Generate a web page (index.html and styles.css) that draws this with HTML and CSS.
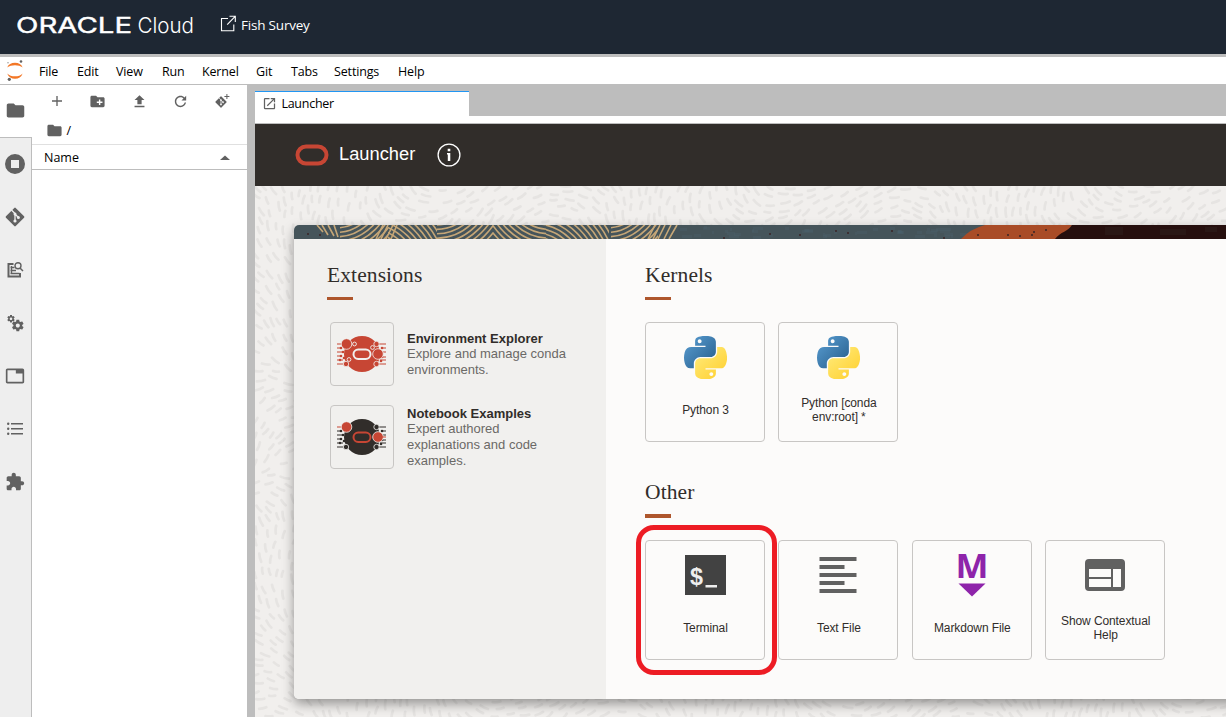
FILE: index.html
```html
<!DOCTYPE html>
<html lang="en">
<head>
<meta charset="utf-8">
<title>Launcher</title>
<link rel="stylesheet" href="styles.css">
</head>
<body>
<svg class="defs" width="0" height="0">
  <defs>
    <linearGradient id="py-blue" x1="0" y1="0" x2="0.8" y2="0.8"><stop offset="0" stop-color="#5a9fd4"/><stop offset="1" stop-color="#306998"/></linearGradient>
    <linearGradient id="py-yellow" x1="0.2" y1="0.1" x2="0.8" y2="0.8"><stop offset="0" stop-color="#ffe873"/><stop offset="1" stop-color="#ffd43b"/></linearGradient>
    <symbol id="folder" viewBox="0 0 24 24"><path d="M10 4H4c-1.1 0-1.99.9-1.99 2L2 18c0 1.1.9 2 2 2h16c1.1 0 2-.9 2-2V8c0-1.1-.9-2-2-2h-8l-2-2z"/></symbol>
    <symbol id="gear" viewBox="0 0 24 24"><path d="M19.43 12.98c.04-.32.07-.64.07-.98s-.03-.66-.07-.98l2.11-1.65c.19-.15.24-.42.12-.64l-2-3.46c-.12-.22-.39-.3-.61-.22l-2.49 1c-.52-.4-1.08-.73-1.69-.98l-.38-2.65C14.46 2.18 14.25 2 14 2h-4c-.25 0-.46.18-.49.42l-.38 2.65c-.61.25-1.17.59-1.69.98l-2.49-1c-.23-.09-.49 0-.61.22l-2 3.46c-.13.22-.07.49.12.64l2.11 1.65c-.04.32-.07.65-.07.98s.03.66.07.98l-2.11 1.65c-.19.15-.24.42-.12.64l2 3.46c.12.22.39.3.61.22l2.49-1c.52.4 1.08.73 1.69.98l.38 2.65c.03.24.24.42.49.42h4c.25 0 .46-.18.49-.42l.38-2.65c.61-.25 1.17-.59 1.69-.98l2.49 1c.23.09.49 0 .61-.22l2-3.46c.12-.22.07-.49-.12-.64l-2.11-1.65zM12 15.5c-1.93 0-3.5-1.57-3.5-3.5s1.57-3.5 3.5-3.5 3.5 1.57 3.5 3.5-1.57 3.5-3.5 3.5z"/></symbol>
    <symbol id="git" viewBox="0 0 20 20">
      <rect x="3.100" y="3.100" width="13.800" height="13.800" rx="1" transform="rotate(45 10 10)"/>
      <g class="git-branch"><path d="M6.500 3L10 6.600V14M10 7L13.200 10.200" fill="none" stroke-width="1.300"/><circle cx="10" cy="7" r="1.500"/><circle cx="10" cy="14" r="1.600"/><circle cx="13.400" cy="10.400" r="1.500"/></g>
    </symbol>
    <symbol id="launch" viewBox="0 0 24 24"><path d="M19 19H5V5h7V3H5a2 2 0 0 0-2 2v14a2 2 0 0 0 2 2h14c1.1 0 2-.9 2-2v-7h-2v7zM14 3v2h3.59l-9.83 9.83 1.41 1.41L19 6.41V10h2V3h-7z"/></symbol>
    <symbol id="python" viewBox="0 0 111 111">
      <path fill="url(#py-blue)" d="M54.92 0C50.34.02 45.96.41 42.11 1.09 30.76 3.1 28.7 7.29 28.7 15.03v10.22h26.81v3.41H18.64c-7.79 0-14.62 4.68-16.75 13.59-2.46 10.21-2.57 16.59 0 27.25 1.91 7.94 6.46 13.59 14.25 13.59h9.22v-12.25c0-8.85 7.66-16.66 16.75-16.66h26.78c7.46 0 13.41-6.14 13.41-13.62V15.03c0-7.27-6.13-12.72-13.41-13.94C64.28.33 59.5-.02 54.92 0zM40.42 8.22c2.77 0 5.03 2.3 5.03 5.12 0 2.82-2.26 5.1-5.03 5.1-2.78 0-5.03-2.28-5.03-5.1 0-2.82 2.25-5.12 5.03-5.12z"/>
      <path fill="url(#py-yellow)" d="M85.64 28.66v11.9c0 9.23-7.83 17-16.75 17H42.11c-7.34 0-13.41 6.28-13.41 13.63v25.53c0 7.27 6.32 11.54 13.41 13.62 8.49 2.5 16.63 2.95 26.78 0 6.75-1.95 13.41-5.89 13.41-13.62V86.5H55.51v-3.41H95.7c7.79 0 10.7-5.43 13.41-13.59 2.8-8.4 2.68-16.48 0-27.25-1.93-7.76-5.61-13.59-13.41-13.59zM70.58 93.31c2.78 0 5.03 2.28 5.03 5.1 0 2.82-2.25 5.12-5.03 5.12-2.77 0-5.03-2.3-5.03-5.12 0-2.82 2.26-5.1 5.03-5.1z"/>
    </symbol>
  </defs>
</svg>

<header class="topbar">
  <svg class="brand" width="180" height="24" viewBox="0 0 180 24">
    <text class="brand-name" x="1" y="18.500" textLength="116" lengthAdjust="spacingAndGlyphs">ORACLE</text>
    <text class="brand-sub" x="122.500" y="19" textLength="56.500" lengthAdjust="spacingAndGlyphs">Cloud</text>
  </svg>
  <svg class="project-icon" width="18" height="18" viewBox="0 0 18 18" fill="none" stroke="#fff" stroke-width="1.1"><path d="M8 3.5H1.5v12.2h12.3V9.5M9.5 1.2h5.8V7M15.2 1.3L7.2 9.6"/></svg>
  <span class="project">Fish Survey</span>
</header>

<nav class="menubar">
  <svg class="jupyter" width="18" height="22" viewBox="0 0 18 22">
    <path fill="#f37726" d="M1.200 7.600C2.500 4.200 5.200 2.800 9 2.800s6.300 1.400 7.600 4.800C14.700 5.900 12 5.200 9 5.200S3.200 5.900 1.200 7.600zM1.200 13.400c1.500 3.700 4.200 5.300 7.800 5.300s6.300-1.600 7.600-5.300c-1.700 2-4.500 2.900-7.600 2.900s-5.800-.9-7.800-2.900z"/>
    <circle cx="15" cy="1.500" r="1.300" fill="#616161"/><circle cx="2" cy="2.800" r=".8" fill="#9e9e9e"/><circle cx="3.300" cy="19.300" r="1.600" fill="#616161"/>
  </svg>
  <ul class="menu"><li>File</li><li>Edit</li><li>View</li><li>Run</li><li>Kernel</li><li>Git</li><li>Tabs</li><li>Settings</li><li>Help</li></ul>
</nav>

<div class="workspace">
  <aside class="rail">
    <div class="rail-item active"><svg width="21" height="21"><use href="#folder"/></svg></div>
    <div class="rail-item"><svg width="20" height="20" viewBox="0 0 20 20"><path fill-rule="evenodd" d="M10 0a10 10 0 1 0 0 20a10 10 0 0 0 0-20zM6 6h8v8H6z"/></svg></div>
    <div class="rail-item"><svg width="20" height="20"><use href="#git"/></svg></div>
    <div class="rail-item"><svg class="outline" width="18" height="18" viewBox="0 0 18 18"><path stroke-width="2" d="M7.500 3H2.500v12.500H14v-3.500"/><path stroke-width="1.400" d="M4.500 6.500h4M4.500 9.500h5.500M4.500 12.500h9M5.500 5v8"/><circle cx="12" cy="4.700" r="3" stroke-width="1.400"/><path stroke-width="1.500" d="M14 7l3 3"/></svg></div>
    <div class="rail-item"><svg width="20" height="20" viewBox="0 0 20 20"><use href="#gear" x="1.500" y="1.200" width="9" height="9"/><use href="#gear" x="5.800" y="5.500" width="14" height="14"/></svg></div>
    <div class="rail-item"><svg width="20" height="20" viewBox="0 0 24 24"><path d="M21 3H3c-1.100 0-2 .9-2 2v14c0 1.100.9 2 2 2h18c1.100 0 2-.9 2-2V5c0-1.100-.9-2-2-2zm0 16H3V5h10v4h8v10z"/></svg></div>
    <div class="rail-item"><svg width="18" height="16" viewBox="0 0 18 16"><path d="M5 2h12v1.500H5zM5 7h12v1.500H5zM5 12h12v1.500H5z"/><circle cx="2.200" cy="2.750" r="1.200"/><circle cx="2.200" cy="7.750" r="1.200"/><circle cx="2.200" cy="12.750" r="1.200"/></svg></div>
    <div class="rail-item"><svg width="20" height="20" viewBox="0 0 24 24"><path d="M20.500 11H19V7c0-1.100-.9-2-2-2h-4V3.500C13 2.120 11.880 1 10.500 1S8 2.120 8 3.500V5H4c-1.100 0-1.990.9-1.990 2v3.800H3.500c1.490 0 2.700 1.210 2.700 2.700s-1.210 2.700-2.700 2.700H2V20c0 1.100.9 2 2 2h3.800v-1.500c0-1.490 1.210-2.700 2.700-2.700 1.490 0 2.700 1.210 2.700 2.700V22H17c1.100 0 2-.9 2-2v-4h1.500c1.380 0 2.500-1.120 2.500-2.500S21.880 11 20.500 11z"/></svg></div>
  </aside>

  <section class="files">
    <div class="file-tools">
      <svg width="16" height="16" viewBox="0 0 24 24"><path d="M19.500 13h-6.500v6.500h-2V13H4.500v-2H11V4.500h2V11h6.500v2z"/></svg>
      <svg width="17" height="17" viewBox="0 0 24 24"><path d="M20 6h-8l-2-2H4c-1.110 0-1.990.89-1.990 2L2 18c0 1.110.89 2 2 2h16c1.110 0 2-.89 2-2V8c0-1.110-.89-2-2-2zm-1 8h-3v3h-2v-3h-3v-2h3V9h2v3h3v2z"/></svg>
      <svg width="17" height="17" viewBox="0 0 24 24"><path d="M5 20h14v-2H5v2zM5 10h4v6h6v-6h4l-7-7-7 7z"/></svg>
      <svg width="17" height="17" viewBox="0 0 18 18"><path d="M9 13.500c-2.490 0-4.500-2.010-4.500-4.500S6.510 4.500 9 4.500c1.240 0 2.360.52 3.170 1.330L10 8h5V3l-1.760 1.760C12.150 3.680 10.660 3 9 3 5.690 3 3.010 5.690 3.010 9S5.690 15 9 15c2.970 0 5.430-2.160 5.900-5h-1.520c-.46 2-2.240 3.500-4.380 3.500z"/></svg>
      <svg width="16" height="16" viewBox="0 0 16 16"><use href="#git" x="1" y="3" width="12" height="12"/><path d="M12.400 1h1v2h2v1h-2v2h-1v-2h-2v-1h2z"/></svg>
    </div>
    <div class="crumbs"><svg width="17" height="17"><use href="#folder"/></svg><span>/</span></div>
    <div class="file-head"><span>Name</span><svg width="10" height="5" viewBox="0 0 10 5"><path d="M0 5L5 .5L10 5z"/></svg></div>
  </section>

  <main class="dock">
    <div class="tab"><svg width="15" height="15"><use href="#launch"/></svg><span>Launcher</span></div>
    <div class="dock-line"></div>
    <div class="launcher-head">
      <svg width="34" height="22" viewBox="0 0 34 22"><rect x="2.500" y="2.500" width="29" height="17" rx="8.500" fill="none" stroke="#c74634" stroke-width="4"/></svg>
      <h1>Launcher</h1>
      <svg width="24" height="24" viewBox="0 0 24 24"><circle cx="12" cy="12" r="10.900" fill="none" stroke="#fff" stroke-width="1.300"/><path fill="#fff" d="M10.700 5.700h2.600v2.500h-2.600zM10 10h3.300v8h-2.500v-6.500H10z"/></svg>
    </div>
    <div class="canvas">
      <svg class="texture" id="texture" width="971" height="531"></svg>
      <div class="panel">
        <svg class="banner" id="banner" width="960" height="14" viewBox="294 225 960 14"></svg>
        <div class="panel-body">
          <section class="extensions">
            <h2>Extensions</h2>
            <article class="ext">
              <div class="ext-icon"><svg class="orb orb-red" width="62" height="62" viewBox="0 0 62 62"></svg></div>
              <div class="ext-text"><h3>Environment Explorer</h3><p>Explore and manage conda environments.</p></div>
            </article>
            <article class="ext">
              <div class="ext-icon"><svg class="orb orb-dark" width="62" height="62" viewBox="0 0 62 62"></svg></div>
              <div class="ext-text"><h3>Notebook Examples</h3><p>Expert authored explanations and code examples.</p></div>
            </article>
          </section>
          <section class="launch">
            <h2>Kernels</h2>
            <div class="cards">
              <div class="card"><div class="card-icon"><svg width="43" height="43"><use href="#python"/></svg></div><p>Python 3</p></div>
              <div class="card"><div class="card-icon"><svg width="43" height="43"><use href="#python"/></svg></div><p>Python [conda env:root] *</p></div>
            </div>
            <h2 class="other">Other</h2>
            <div class="cards files-row">
              <div class="card marked"><div class="card-icon"><svg width="41" height="40" viewBox="0 0 41 40"><rect width="41" height="40" fill="#424242"/><text class="dollar" x="5" y="29.500" textLength="13" lengthAdjust="spacingAndGlyphs">$</text><path fill="#eee" d="M20.500 30h11.500v2.500H20.500z"/></svg></div><p>Terminal</p></div>
              <div class="card"><div class="card-icon"><svg width="38" height="36" viewBox="0 0 38 36"><path fill="#616161" d="M.5 0h37v4H.5zM.5 8h25v4H.5zM.5 16h37v4H.5zM.5 24h25v4H.5zM.5 32h37v4H.5z"/></svg></div><p>Text File</p></div>
              <div class="card"><div class="card-icon"><svg class="mark-icon" width="34" height="44" viewBox="-2 0 34 44"><text class="mark" x="-1.500" y="24.500" textLength="33" lengthAdjust="spacingAndGlyphs">M</text><path fill="#8e24aa" d="M1.500 30.500h27L15 43.500z"/></svg></div><p>Markdown File</p></div>
              <div class="card"><div class="card-icon"><svg width="40" height="32" viewBox="0 0 40 32"><path fill="#616161" fill-rule="evenodd" d="M4 0h32a4 4 0 0 1 4 4v24a4 4 0 0 1-4 4H4a4 4 0 0 1-4-4V4a4 4 0 0 1 4-4zM4 10v8h22v-8zM4 20v8h22v-8zM28 10v18h8V10z"/></svg></div><p>Show Contextual Help</p></div>
            </div>
          </section>
        </div>
      </div>
    </div>
  </main>
</div>
<script src="art.js"></script>
</body>
</html>
```
FILE: styles.css
```css
*, *::before, *::after { box-sizing: border-box; margin: 0; padding: 0; }
body { width: 1226px; height: 717px; overflow: hidden; display: flex; flex-direction: column; background: #fff; color: #000; font: 12.5px "Open Sans", "Noto Sans", sans-serif; }
svg { display: block; flex: none; }
.defs { position: absolute; }

.topbar { height: 54px; flex: none; background: #1e2733; display: flex; align-items: center; padding: 0 0 4px 15px; color: #fff; }
.brand { overflow: visible; margin-top: 2px; }
.brand-name { font: 400 21px Inter, sans-serif; fill: #fff; stroke: #fff; stroke-width: .4px; }
.brand-sub { font: 300 22px Inter, sans-serif; fill: #fff; }
.project-icon { margin-left: 25px; margin-top: -3px; }
.project { margin-left: 3px; font-size: 13.5px; letter-spacing: -.2px; }

.menubar { height: 31px; flex: none; display: flex; align-items: center; border-top: 3px solid #bdbdbd; border-bottom: 1px solid #bdbdbd; padding-left: 6px; }
.menu { list-style: none; margin-left: 15px; display: grid; grid-template-columns: 38px 39px 46px 40px 54px 35px 43px 64px 40px; letter-spacing: -.15px; padding-top: 1px; }

.workspace { flex: 1; min-height: 0; display: flex; }
.rail { width: 32px; flex: none; background: #eee; }
.rail-item { height: 53px; padding: 0 2px 2px 0; display: flex; align-items: center; justify-content: center; border-right: 1px solid #bdbdbd; }
.rail-item.active { background: #fff; border-right: 0; padding: 0 2px 1px 0; border-bottom: 1px solid #bdbdbd; }
.rail-item:last-child { height: 261px; align-items: flex-start; padding-top: 16px; }
.rail svg, .files svg { fill: #616161; }
.rail .outline { fill: none; stroke: #616161; }
.git-branch { fill: #eee; stroke-width: 0; }
.git-branch path { stroke: #eee; fill: none; }

.files { width: 215px; flex: none; background: #fff; }
.file-tools { height: 33px; display: grid; grid-template-columns: repeat(5, 41.3px); justify-items: center; align-items: center; padding: 0 0 1px 4px; }
.crumbs { height: 26px; display: flex; align-items: center; padding: 0 0 1px 13.500px; gap: 4px; }
.file-head { height: 26px; display: flex; align-items: center; justify-content: space-between; border-top: 1px solid #e0e0e0; border-bottom: 1px solid #bdbdbd; padding: 0 17.500px 0 12px; }

.dock { flex: 1; min-width: 0; background: #bdbdbd; padding: 6px 0 0 8px; display: flex; flex-direction: column; }
.tab { width: 214px; height: 25px; background: #fff; border-top: 1px solid #2196f3; display: flex; align-items: center; gap: 4px; padding: 0 0 1px 7.400px; letter-spacing: -.25px; }
.tab svg { fill: #616161; }
.dock-line { height: 8px; background: #fff; border-bottom: 1px solid #bdbdbd; }
.launcher-head { height: 62px; background: #312d2a; display: flex; align-items: center; padding-left: 40px; color: #fff; }
.launcher-head h1 { font: 18.3px "Liberation Sans", Arial, sans-serif; margin: 0 22px 2px 10px; }
.launcher-head h1 + svg { margin-bottom: 1px; }

.canvas { flex: 1; min-height: 0; position: relative; overflow: hidden; background: #f1efed; padding: 39px 0 0 39px; }
.texture { position: absolute; left: 0; top: 0; }
.texture path { stroke: #e6e4e2; stroke-width: 2.700; stroke-linecap: round; fill: none; }
.panel { position: relative; width: 960px; height: 474px; border-radius: 5px; overflow: hidden; background: #fcfbfa; box-shadow: 0 5px 12px rgba(0, 0, 0, .38); }
.panel-body { height: 460px; display: flex; }
.extensions { width: 312px; background: #f1f0ee; padding: 24px 0 0 33px; }
.launch { flex: 1; padding: 24px 0 0 39px; }
h2 { font: 21.5px/25px "Liberation Serif", serif; letter-spacing: .1px; color: #312d2a; }
h2::after { content: ""; display: block; width: 26px; height: 3px; margin-top: 9px; background: #ae562c; }
h2.other { margin-top: 38px; }
h2.other::after { height: 4px; }
.ext { display: flex; align-items: center; margin: 22px 0 -3px 3px; font: 13px/15.6px "Liberation Sans", Arial, sans-serif; }
.ext-icon { width: 64px; height: 64px; flex: none; border: 1px solid #c8c6c4; border-radius: 4px; }
.ext-text { width: 165px; margin-left: 13px; }
.ext h3 { font-size: 13px; color: #312d2a; white-space: nowrap; }
.ext p { color: #6b6966; }

.cards { display: flex; gap: 13.4px; margin-top: 22px; }
.card { width: 120px; height: 120px; border: 1px solid #c8c6c4; border-radius: 4px; font: 12px/14px "Liberation Sans", Arial, sans-serif; color: #312d2a; text-align: center; position: relative; }
.card-icon { height: 69px; display: flex; align-items: center; justify-content: center; }
.files-row .card-icon { padding-bottom: 2px; }
.card p { height: 36px; display: flex; align-items: center; justify-content: center; padding: 0 9px 0 10px; letter-spacing: -.1px; }
.card.marked::after { content: ""; position: absolute; left: -10px; top: -16px; width: 141px; height: 150px; border: 5px solid #ed1c24; border-radius: 18px; z-index: 2; }
.dollar { font: bold 24px "Liberation Sans", sans-serif; fill: #eee; }
.mark-icon { overflow: visible; }
.mark { font: bold 34px "Open Sans", sans-serif; fill: #8e24aa; }
```
FILE: art.js
```js
// Small helper for a repeatable pseudo-random sequence.
let seed = 7;
function rnd() { seed = (seed * 16807) % 2147483647; return seed / 2147483647; }

// Page texture: short dashes that follow a slowly turning direction field,
// placed one by one so that no two of them touch.
(function () {
  const placed = [], cell = new Map();
  let d = "";
  for (let n = 0; n < 60000; n++) {
    const x = rnd() * 971, y = rnd() * 531;
    const a = 0.2 + 1.25 * Math.sin(x / 55 + Math.sin(y / 50)) + 0.4 * Math.cos(y / 28) + (rnd() - 0.5) * 0.5;
    const l = 2.8 + rnd() * 1.8, dx = Math.cos(a) * l, dy = Math.sin(a) * l;
    const pts = [[x - dx, y - dy], [x, y], [x + dx, y + dy]];
    const cx = Math.floor(x / 16), cy = Math.floor(y / 16);
    let clear = true;
    for (let i = -1; i <= 1 && clear; i++) for (let j = -1; j <= 1 && clear; j++) {
      for (const q of cell.get((cx + i) + "," + (cy + j)) || []) {
        if (pts.some((p) => Math.hypot(p[0] - q[0], p[1] - q[1]) < 5.3)) { clear = false; break; }
      }
    }
    if (!clear) continue;
    const key = cx + "," + cy;
    cell.set(key, (cell.get(key) || []).concat(pts));
    d += `M${(x - dx).toFixed(1)} ${(y - dy).toFixed(1)}q${(dx - dy * 0.2).toFixed(1)} ${(dy + dx * 0.2).toFixed(1)} ${(2 * dx).toFixed(1)} ${(2 * dy).toFixed(1)}`;
  }
  document.getElementById("texture").innerHTML = `<path d="${d}"/>`;
})();

// Panel banner: teal strip with bands of concentric arcs, a rust patch and a dark end.
(function () {
  const bands = [
    [340, 388, 336, 190], [388, 437, 368, 275], [437, 493, 436, 187],
    [493, 546, 550, 187], [546, 609, 534, 275], [611, 658, 607, 190]
  ];
  let s = '<rect x="294" y="225" width="960" height="14" fill="#45545a"/>';
  bands.forEach(([x0, x1, cx, cy], i) => {
    s += `<clipPath id="b${i}"><rect x="${x0}" y="225" width="${x1 - x0}" height="14"/></clipPath><g clip-path="url(#b${i})" fill="none" stroke="#c5a677" stroke-width="1.6">`;
    for (let r = 16; r < 95; r += 4.4) s += `<circle cx="${cx}" cy="${cy}" r="${r}"/>`;
    s += "</g>";
  });
  s += '<path fill="none" stroke="#c5a677" stroke-width="1.6" d="M317 225l6 7M322 225l6 10M328 225l6 11M334 225l4 12M376 239l7-14M381 239l7-14M386 239l7-14M391 239l6-14M648 239l7-14M653 239l7-14M658 239l7-14M664 239l7-14M669 239l8-14"/>';
  for (let i = 0; i < 45; i++) {
    s += `<rect x="${(680 + rnd() * 280).toFixed(0)}" y="${(226 + rnd() * 10).toFixed(0)}" width="${(2 + rnd() * 9).toFixed(0)}" height="3" fill="#4b626c" opacity=".35"/>`;
  }
  s += '<path fill="#a94c27" d="M961 239q9-10 24-14h87q-4 6-16 14z"/><path fill="#260f0e" d="M1055 239c5-7 14-8 17-14h182v14z"/>';
  [[308, 234], [320, 235], [724, 238], [770, 234], [800, 235], [836, 231], [848, 233], [892, 231], [944, 238], [978, 235], [1008, 235], [1020, 236], [1034, 232], [1032, 235], [1046, 230]].forEach(([x, y]) => {
    s += `<circle cx="${x}" cy="${y}" r="1" fill="#3a2427"/>`;
  });
  s += '<path fill="#30211f" opacity=".45" d="M1105 227h18v8h-18zM1160 229h26v6h-26zM1205 227h12v5h-12z"/>';
  document.getElementById("banner").innerHTML = s;
})();

// Extension tile artwork: a disc with circuit traces on both sides.
document.querySelectorAll(".orb").forEach((el) => {
  const dark = el.classList.contains("orb-dark");
  const red = "#c74634", main = dark ? "#312d2a" : red, bg = "#f1f0ee";
  const loop = dark ? red : bg;
  let s = `<circle cx="31" cy="31" r="18" fill="${main}"/>`;
  s += `<path stroke="${main}" stroke-width="1" fill="none" d="M6 41h10M45 21h10M45 41h10M6 25h4M6 29h6M6 33h4M6 37h6M51 25h4M50 29h5M51 34h4M49 37h6"/>`;
  s += `<path stroke="${red}" stroke-width="1" d="M6 21h10"/>`;
  [[10, 25], [12, 29], [10, 33], [9, 37], [13, 35], [51, 25], [51, 34], [50, 38]].forEach(([x, y]) => { s += `<circle cx="${x}" cy="${y}" r="1.3" fill="${main}"/>`; });
  [[15, 41], [45.5, 21], [45.5, 41]].forEach(([x, y]) => { s += `<circle cx="${x}" cy="${y}" r="2.7" fill="${main}" stroke="${bg}" stroke-width=".8"/>`; });
  [[15.5, 21], [47, 31]].forEach(([x, y]) => { s += `<circle cx="${x}" cy="${y}" r="5.3" fill="${red}" stroke="${bg}" stroke-width=".8"/>`; });
  if (dark) s += `<path stroke="${red}" d="M51 31h4"/>`;
  else {
    s += `<g fill="none" stroke="${bg}" stroke-width=".9"><circle cx="23.5" cy="21" r="1.9"/><circle cx="41.5" cy="24.5" r="1.9"/><circle cx="18" cy="36.5" r="1.9"/></g>`;
  }
  s += `<rect x="22.5" y="26.5" width="17" height="9.5" rx="4.7" fill="none" stroke="${loop}" stroke-width="2"/>`;
  el.innerHTML = s;
});
```
